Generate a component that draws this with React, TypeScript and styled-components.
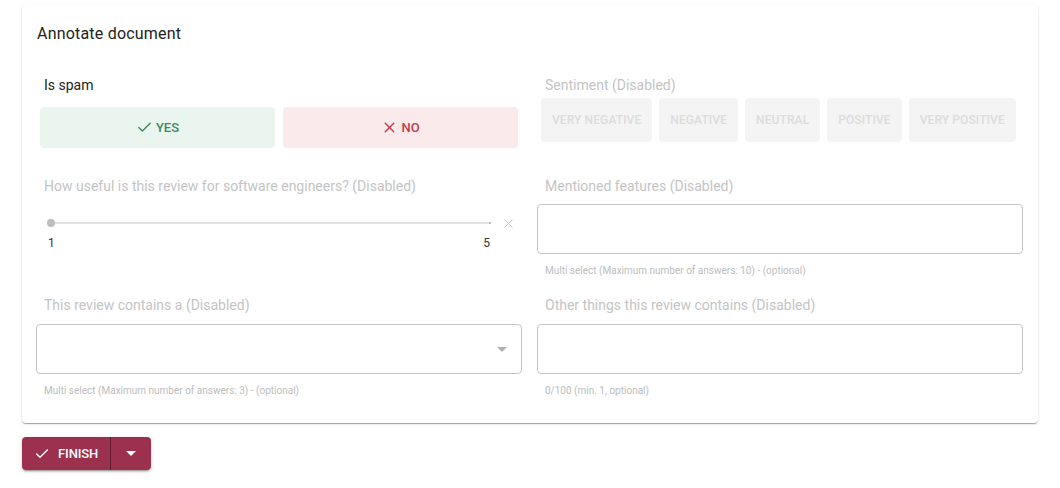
import React from "react";
import styled, { createGlobalStyle } from "styled-components";
import { Check, X } from "lucide-react";

const Global = createGlobalStyle`
  html, body { margin: 0; padding: 0; background: #fff; }
  body { font-family: Roboto, "Liberation Sans", Arial, sans-serif; }
  * { box-sizing: border-box; }
`;

const Page = styled.div`
  padding: 5px 22px;
`;

const Card = styled.section`
  background: #fff;
  border-radius: 4px;
  box-shadow: 0px 2px 1px -1px rgba(0,0,0,0.2), 0px 1px 1px 0px rgba(0,0,0,0.14), 0px 1px 3px 0px rgba(0,0,0,0.12);
  padding: 17px 15px 25px 14px;
`;

const Title = styled.h2`
  margin: 0 0 29px 1px;
  font-size: 16px;
  line-height: 24px;
  font-weight: 400;
  color: #222;
  letter-spacing: 0.2px;
`;

const Grid = styled.div`
  display: grid;
  grid-template-columns: 486px 486px;
  grid-template-rows: 101px 119px auto;
  column-gap: 15px;
`;

const Field = styled.div`
  display: flex;
  flex-direction: column;
`;

const Label = styled.div<{ $disabled?: boolean }>`
  font-size: 14px;
  line-height: 20px;
  padding-left: 8px;
  color: ${(p) => (p.$disabled ? "#c4c4c4" : "#222")};
`;

const ToggleRow = styled.div`
  display: flex;
  gap: 8px;
  margin: 12px 4px 0;
`;

const Toggle = styled.button<{ $tone: "yes" | "no" }>`
  flex: 1;
  height: 41px;
  border: none;
  border-radius: 4px;
  display: flex;
  align-items: center;
  justify-content: center;
  gap: 3px;
  font-family: inherit;
  font-size: 13px;
  font-weight: 500;
  background: ${(p) => (p.$tone === "yes" ? "#e9f5ee" : "#fbeaeb")};
  color: ${(p) => (p.$tone === "yes" ? "#3b8b5c" : "#c43a4a")};
`;

const ChipRow = styled.div`
  display: flex;
  gap: 7px;
  margin: 3px 4px 0;
`;

const Chip = styled.div`
  height: 44px;
  padding: 0 11px;
  border-radius: 4px;
  display: flex;
  align-items: center;
  background: #f4f4f4;
  color: #dcdcdc;
  font-size: 12px;
  font-weight: 500;
  letter-spacing: 0.1px;
  white-space: nowrap;
`;

const SliderWrap = styled.div`
  margin-top: 19px;
  padding-left: 15px;
  padding-right: 8px;
`;

const SliderLine = styled.div`
  display: flex;
  align-items: center;
  height: 16px;
  gap: 11px;
`;

const Track = styled.div`
  position: relative;
  flex: 0 0 439px;
  height: 2px;
  background: #e2e2e2;
`;

const Thumb = styled.span`
  position: absolute;
  left: -4px;
  top: -3px;
  width: 8px;
  height: 8px;
  border-radius: 50%;
  background: #bdbdbd;
`;

const TickEnd = styled.span`
  position: absolute;
  right: -1px;
  top: 0;
  width: 2px;
  height: 2px;
  background: #bcbcbc;
`;

const Clear = styled.span`
  display: flex;
  color: #c8c8c8;
`;

const Marks = styled.div`
  display: flex;
  justify-content: space-between;
  width: 442px;
  margin: 4px 0 0 -3px;
  font-size: 12px;
  line-height: 16px;
  color: #333;
`;

const Box = styled.div<{ $gap: number }>`
  margin-top: ${(p) => p.$gap}px;
  height: 50px;
  border: 1px solid #c4c4c4;
  border-radius: 4px;
  display: flex;
  align-items: center;
  justify-content: flex-end;
  padding-right: 14px;
`;

const Caret = styled.span`
  width: 0;
  height: 0;
  border-left: 5px solid transparent;
  border-right: 5px solid transparent;
  border-top: 5px solid #b0b0b0;
`;

const Helper = styled.div`
  margin-top: 10px;
  padding-left: 8px;
  font-size: 10px;
  line-height: 14px;
  color: #bdbdbd;
`;

const Actions = styled.div`
  margin-top: 14px;
  display: flex;
`;

const SplitButton = styled.div`
  display: inline-flex;
  height: 33px;
  border-radius: 4px;
  background: #9b304f;
  color: #fff;
  box-shadow: 0px 3px 1px -2px rgba(0,0,0,0.2), 0px 2px 2px 0px rgba(0,0,0,0.14), 0px 1px 5px 0px rgba(0,0,0,0.12);
  overflow: hidden;
`;

const MainPart = styled.button`
  display: flex;
  align-items: center;
  gap: 8px;
  padding: 0 12px 0 12px;
  border: none;
  background: transparent;
  color: #fff;
  font-family: inherit;
  font-size: 13px;
  font-weight: 500;
  letter-spacing: -0.1px;
  border-right: 1px solid #5e1a2e;
`;

const MenuPart = styled.button`
  width: 40px;
  display: flex;
  align-items: center;
  justify-content: center;
  border: none;
  background: transparent;
`;

const WhiteCaret = styled.span`
  width: 0;
  height: 0;
  border-left: 5px solid transparent;
  border-right: 5px solid transparent;
  border-top: 5px solid #fff;
`;

const sentiments = ["VERY NEGATIVE", "NEGATIVE", "NEUTRAL", "POSITIVE", "VERY POSITIVE"];

export default function App() {
  return (
    <Page>
      <Global />
      <Card>
        <Title>Annotate document</Title>
        <Grid>
          <Field>
            <Label>Is spam</Label>
            <ToggleRow>
              <Toggle $tone="yes">
                <Check size={17} strokeWidth={2} />
                YES
              </Toggle>
              <Toggle $tone="no">
                <X size={17} strokeWidth={2} />
                NO
              </Toggle>
            </ToggleRow>
          </Field>
          <Field>
            <Label $disabled>Sentiment (Disabled)</Label>
            <ChipRow>
              {sentiments.map((s) => (
                <Chip key={s}>{s}</Chip>
              ))}
            </ChipRow>
          </Field>
          <Field>
            <Label $disabled>How useful is this review for software engineers? (Disabled)</Label>
            <SliderWrap>
              <SliderLine>
                <Track>
                  <Thumb />
                  <TickEnd />
                </Track>
                <Clear>
                  <X size={15} strokeWidth={1.4} />
                </Clear>
              </SliderLine>
              <Marks>
                <span>1</span>
                <span>5</span>
              </Marks>
            </SliderWrap>
          </Field>
          <Field>
            <Label $disabled>Mentioned features (Disabled)</Label>
            <Box $gap={8} />
            <Helper>Multi select (Maximum number of answers: 10) - (optional)</Helper>
          </Field>
          <Field>
            <Label $disabled>This review contains a (Disabled)</Label>
            <Box $gap={9}>
              <Caret />
            </Box>
            <Helper>Multi select (Maximum number of answers: 3) - (optional)</Helper>
          </Field>
          <Field>
            <Label $disabled>Other things this review contains (Disabled)</Label>
            <Box $gap={9} />
            <Helper>0/100 (min. 1, optional)</Helper>
          </Field>
        </Grid>
      </Card>
      <Actions>
        <SplitButton>
          <MainPart>
            <Check size={16} strokeWidth={2} />
            FINISH
          </MainPart>
          <MenuPart>
            <WhiteCaret />
          </MenuPart>
        </SplitButton>
      </Actions>
    </Page>
  );
}
